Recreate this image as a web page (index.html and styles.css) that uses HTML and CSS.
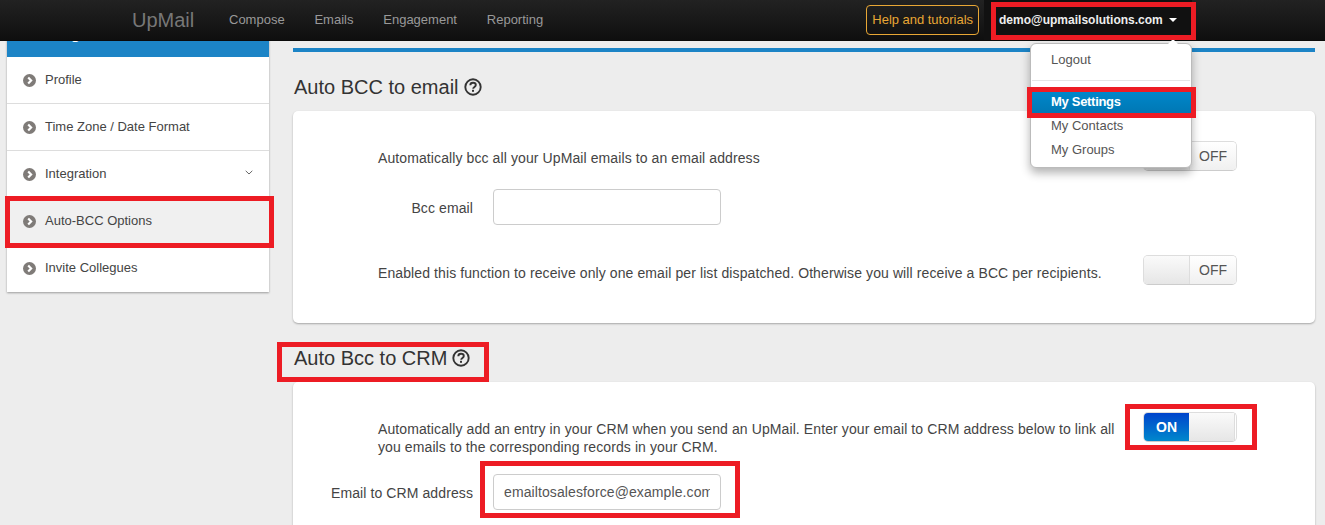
FILE: index.html
```html
<!DOCTYPE html>
<html lang="en">
<head>
<meta charset="utf-8">
<title>UpMail settings</title>
<link rel="stylesheet" href="styles.css">
</head>
<body>
<svg class="defs" width="0" height="0">
  <symbol id="go" viewBox="0 0 12 12"><circle cx="6" cy="6" r="6" fill="#7f7b78"/><path d="M4.8 3.2 7.5 6 4.8 8.8" fill="none" stroke="#fff" stroke-width="2"/></symbol>
  <symbol id="help" viewBox="0 0 18 18"><circle cx="9" cy="9" r="7.7" fill="none" stroke="#333" stroke-width="1.9"/><path d="M6.3 7.2c0-1.6 1.2-2.5 2.7-2.5s2.8.8 2.8 2.3c0 1.9-2.6 1.9-2.6 3.7" fill="none" stroke="#333" stroke-width="1.9"/><rect x="8" y="11.8" width="2" height="2" fill="#333"/></symbol>
</svg>

<header class="navbar">
  <a class="brand">UpMail</a>
  <nav class="nav-links">
    <a>Compose</a>
    <a>Emails</a>
    <a>Engagement</a>
    <a>Reporting</a>
  </nav>
  <a class="help-btn">Help and tutorials</a>
  <a class="user">demo@upmailsolutions.com<span class="caret"></span></a>
</header>

<div class="page">
  <aside class="sidebar">
    <div class="side-head">Settings</div>
    <a class="side-item"><svg class="go"><use href="#go"/></svg>Profile</a>
    <a class="side-item"><svg class="go"><use href="#go"/></svg>Time Zone / Date Format</a>
    <a class="side-item"><svg class="go"><use href="#go"/></svg>Integration<svg class="chev" viewBox="0 0 8 5"><path d="M.7.8 4 4l3.3-3.2" fill="none" stroke="#666" stroke-width="1"/></svg></a>
    <a class="side-item active"><svg class="go"><use href="#go"/></svg>Auto-BCC Options</a>
    <a class="side-item last"><svg class="go"><use href="#go"/></svg>Invite Collegues</a>
  </aside>

  <main class="main">
    <div class="rule"></div>

    <h2 class="title">Auto BCC to email <svg class="help"><use href="#help"/></svg></h2>
    <section class="card first">
      <div class="row">
        <p class="desc single">Automatically bcc all your UpMail emails to an email address</p>
        <div class="toggle"><span class="knob"></span><span class="off">OFF</span></div>
      </div>
      <div class="field">
        <label class="label">Bcc email</label>
        <input class="input" type="text">
      </div>
      <div class="row spaced">
        <p class="desc single">Enabled this function to receive only one email per list dispatched. Otherwise you will receive a BCC per recipients.</p>
        <div class="toggle"><span class="knob"></span><span class="off">OFF</span></div>
      </div>
    </section>

    <h2 class="title second">Auto Bcc to CRM <svg class="help"><use href="#help"/></svg></h2>
    <section class="card">
      <div class="row">
        <p class="desc">Automatically add an entry in your CRM when you send an UpMail. Enter your email to CRM address below to link all you emails to the corresponding records in your CRM.</p>
        <div class="toggle"><span class="on">ON</span><span class="knob"></span></div>
      </div>
      <div class="field crm">
        <label class="label">Email to CRM address</label>
        <input class="input" type="text" value="emailtosalesforce@example.com">
      </div>
    </section>
  </main>
</div>

<div class="dropdown">
  <a class="dd-item">Logout</a>
  <div class="dd-divider"></div>
  <a class="dd-item current">My Settings</a>
  <a class="dd-item">My Contacts</a>
  <a class="dd-item">My Groups</a>
</div>

<div class="mark mark-user"></div>
<div class="mark mark-settings"></div>
<div class="mark mark-side"></div>
<div class="mark mark-title"></div>
<div class="mark mark-toggle"></div>
<div class="mark mark-input"></div>
</body>
</html>
```

FILE: styles.css
```css
* { box-sizing: border-box; }
html, body { height: 525px; overflow: hidden; }
body {
  margin: 0;
  background: #ededed;
  color: #444;
  font: 13px/18px "Liberation Sans", Arial, sans-serif;
}
.defs { position: absolute; }
a { color: inherit; text-decoration: none; }

/* top bar */
.navbar {
  position: absolute;
  z-index: 5;
  top: 0; left: 0; right: 0;
  height: 41px;
  display: flex;
  align-items: center;
  padding-left: 132px;
  background: linear-gradient(#222, #0f0f0f);
  border-bottom: 1px solid #0a0a0a;
}
.brand { color: #777; font-size: 20px; width: 97px; }
.nav-links { display: flex; gap: 29.8px; color: #999; }
.help-btn {
  margin-left: auto;
  height: 30px;
  padding: 0 5px;
  line-height: 28px;
  color: #e8a735;
  border: 1px solid #e8a735;
  border-radius: 4px;
  letter-spacing: -.03px;
}
.user {
  display: flex;
  align-items: center;
  height: 40px;
  width: 208px;
  margin: 0 133px 0 5px;
  padding-left: 15px;
  background: #111;
  color: #eee;
  font-weight: bold;
  font-size: 12px;
}
.caret {
  margin-left: 6px;
  border: 4px solid transparent;
  border-top-color: #fff;
  border-bottom: 0;
}

/* layout */
.page { display: flex; align-items: flex-start; }
.sidebar {
  width: 262px;
  margin-left: 7px;
  background: #fff;
  box-shadow: 0 1px 2px rgba(0,0,0,.35);
}
.side-head {
  height: 57px;
  padding: 25px 0 0 19px;
  background: #1c84c6;
  color: #fff;
  font-size: 16px;
  line-height: 18px;
  font-weight: bold;
}
.side-item {
  position: relative;
  display: flex;
  align-items: center;
  height: 47px;
  padding: 0 16px;
  border-bottom: 1px solid #ddd;
}
.side-item.active { background: #f0f0f0; }
.side-item.last { border-bottom-color: transparent; }
.go { width: 13px; height: 13px; margin-right: 9px; flex: none; }
.chev { width: 8px; height: 5px; margin-left: auto; margin-right: 0; position: relative; top: -2px; }

.main { width: 1022px; margin-left: 24px; padding-top: 48px; }
.rule { height: 4px; background: #1c84c6; }
.title {
  display: flex;
  align-items: center;
  gap: 5px;
  margin: 22px 0 11px 1px;
  height: 26px;
  font-size: 20px;
  font-weight: normal;
  color: #333;
}
.title.second { margin: 22px 0 11px 1px; }
.help { width: 18px; height: 18px; }

.card {
  padding: 30px 78px 38px 85px;
  background: #fff;
  border-radius: 5px;
  box-shadow: 0 1px 2px rgba(0,0,0,.3);
}
.row { display: flex; justify-content: space-between; align-items: flex-start; }
.row.spaced { margin-top: 30px; }
.row.spaced .desc { margin-top: 9px; }
.desc { margin: 8px 0 0; width: 742px; font-size: 14px; letter-spacing: .1px; }
.desc.single { width: auto; }
.toggle {
  display: flex;
  flex: none;
  width: 94px;
  height: 30px;
  overflow: hidden;
  border: 1px solid #ddd;
  border-bottom-color: #ccc;
  border-radius: 5px;
  font-size: 14px;
  line-height: 28px;
}
.knob {
  flex: none;
  width: 46px;
  background: linear-gradient(#fafafa, #e6e6e6);
  border-right: 1px solid #ddd;
}
.off { flex: 1; text-align: center; color: #555; background: linear-gradient(#fff, #f0f0f0); }
.on {
  flex: none;
  width: 45px;
  text-align: center;
  color: #fff;
  font-weight: bold;
  background: linear-gradient(#04c, #08c);
}
.field { display: flex; align-items: center; margin: 18px 0 0 -85px; gap: 20px; }
.field.crm { margin-top: 18px; }
.label { width: 180px; padding-top: 2px; text-align: right; font-size: 14px; letter-spacing: .1px; }
.input {
  width: 228px;
  height: 36px;
  padding: 0 10px;
  border: 1px solid #ccc;
  border-radius: 4px;
  background: #fff;
  color: #555;
  font: 14px "Liberation Sans", Arial, sans-serif;
  letter-spacing: .1px;
}

/* user menu, open over the page */
.dropdown {
  position: absolute;
  z-index: 6;
  top: 43px; left: 1030px;
  width: 162px;
  height: 125px;
  padding: 4px 0;
  background: #fff;
  border: 1px solid #bbb;
  border-radius: 6px;
  box-shadow: 0 5px 10px rgba(0,0,0,.3);
}
.dropdown::before {
  content: "";
  position: absolute;
  top: -5px; left: 137px;
  border: 5px solid transparent;
  border-top: 0;
  border-bottom-color: #fff;
}
.dd-item { display: block; height: 24px; padding: 0 20px; line-height: 24px; color: #555; }
.dd-divider { height: 1px; margin: 8px 1px 9px; background: #e5e5e5; }
.dd-item.current {
  font-weight: bold;
  letter-spacing: -.3px;
  color: #fff;
  background: linear-gradient(#08c, #0077b3);
}

/* red annotation boxes drawn over the screenshot */
.mark { position: absolute; z-index: 7; border: 5px solid #ed1c24; }
.mark-user { left: 991px; top: 2px; width: 205px; height: 38px; }
.mark-settings { left: 1027px; top: 87px; width: 169px; height: 31px; }
.mark-side { left: 5px; top: 196px; width: 269px; height: 52px; }
.mark-title { left: 277px; top: 342px; width: 212px; height: 40px; }
.mark-toggle { left: 1125px; top: 404px; width: 132px; height: 46px; }
.mark-input { left: 480px; top: 461px; width: 260px; height: 57px; }
```
